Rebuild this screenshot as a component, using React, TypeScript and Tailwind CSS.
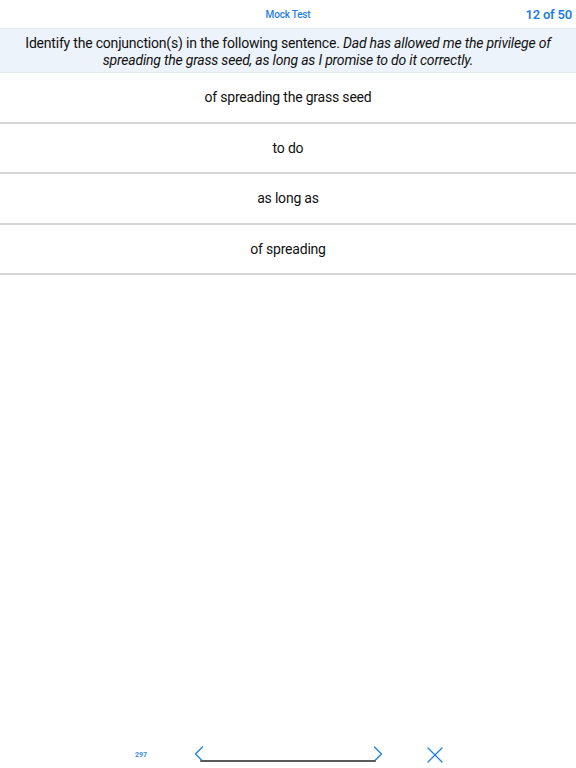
import { ChevronLeft, ChevronRight, X } from 'lucide-react'

// Écran de test blanc : en-tête, énoncé sur bandeau bleu pâle, quatre réponses en liste.

const REPONSES = ['of spreading the grass seed', 'to do', 'as long as', 'of spreading']

export default function App() {
  return (
    <div className="flex h-[768px] w-[576px] flex-col bg-white font-['Roboto','Liberation_Sans',sans-serif] tracking-[-0.2px] text-[#111]">
      <header className="relative flex h-[28px] items-center justify-center">
        <span className="text-[10px] font-medium text-[#1f7fe0]">Mock Test</span>
        <span className="absolute right-[4px] top-[5px] text-[13px] font-semibold text-[#1f7fe0]">
          12 of 50
        </span>
      </header>

      <div className="border-y border-[#e2e8ef] bg-[#edf3fa] px-2 pb-[3px] pt-[6px] text-center text-[14px] leading-[17px]">
        Identify the conjunction(s) in the following sentence.{' '}
        <em>
          Dad has allowed me the privilege of
          <br />
          spreading the grass seed, as long as I promise to do it correctly.
        </em>
      </div>

      <ul>
        {REPONSES.map((r) => (
          <li
            key={r}
            className="flex h-[50.5px] items-center justify-center border-b-2 border-[#d6d6d8] pt-[1px] text-[14px]"
          >
            {r}
          </li>
        ))}
      </ul>

      <div className="flex-1" />

      <footer className="flex h-[28px] items-start">
        <span className="ml-[134px] mt-[11px] w-[14px] text-center text-[7px] font-bold leading-[8px] tracking-normal text-[#3a8de0]">
          297
        </span>
        <div className="relative ml-[37px] flex w-[206.5px] justify-between">
          <ChevronLeft size={28} strokeWidth={1.1} className="text-[#1f7fe0]" />
          <ChevronRight size={28} strokeWidth={1.1} className="text-[#1f7fe0]" />
          <span className="absolute left-[15px] right-[15.5px] top-[20px] h-[2px] rounded bg-[#5a5a5a]" />
        </div>
        <X size={28} strokeWidth={1.1} className="ml-[29.5px] mt-[1px] text-[#1f7fe0]" />
      </footer>
    </div>
  )
}
